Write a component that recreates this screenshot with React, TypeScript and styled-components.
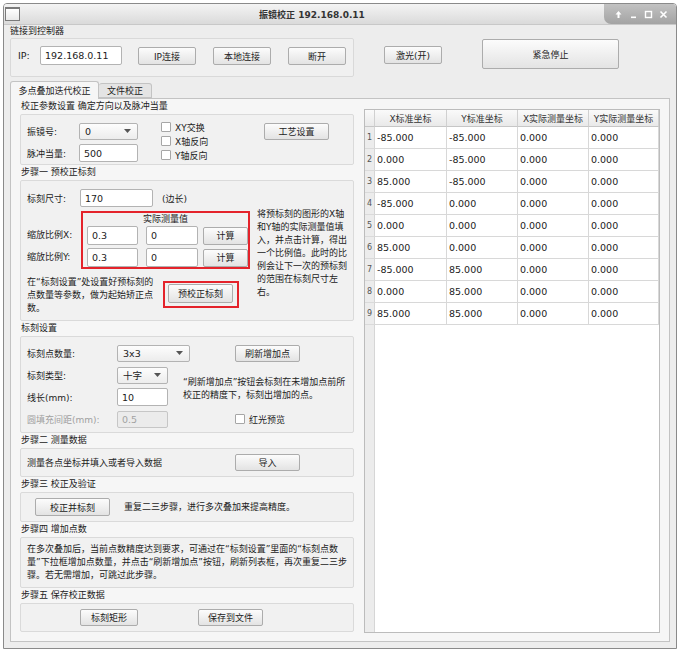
import React from "react";
import styled, { createGlobalStyle } from "styled-components";

const GlobalStyle = createGlobalStyle`
  html, body {
    margin: 0;
    padding: 0;
    background: #ffffff;
  }
  body {
    font-family: "DejaVu Sans", "Noto Sans CJK SC", sans-serif;
    font-size: 9px;
    color: #222222;
  }
  * {
    box-sizing: border-box;
  }
`;

const Window = styled.div`
  margin: 3px 0 0 3px;
  width: 674px;
  height: 646px;
  border: 1px solid #8a8a8a;
  border-radius: 4px 4px 0 0;
  display: flex;
  flex-direction: column;
  background: #ededed;
  overflow: hidden;
`;

const TitleBar = styled.div`
  height: 21px;
  flex: none;
  display: flex;
  align-items: center;
  background: linear-gradient(#f4f4f4, #dadada);
  border-bottom: 1px solid #c8c8c8;
`;

const WinIcon = styled.span`
  width: 15px;
  height: 14px;
  margin-left: 1px;
  border: 1px solid #7a7a7a;
  border-top-width: 2px;
  background: linear-gradient(#ffffff, #e9e9e9);
`;

const TitleText = styled.div`
  flex: 1;
  text-align: center;
  font-weight: bold;
  color: #333333;
`;

const Controls = styled.div`
  align-self: flex-start;
  width: 72px;
  height: 20px;
  display: flex;
  align-items: center;
  gap: 6px;
  padding-left: 10px;
  background: linear-gradient(#c2c2c2, #a3a3a3);
  border-bottom-left-radius: 7px;
`;

const Body = styled.div`
  flex: 1;
  display: flex;
  flex-direction: column;
  padding: 0 6px 6px 6px;
`;

const TopLabel = styled.div`
  height: 13px;
  line-height: 13px;
`;

const ConnectRow = styled.div`
  height: 39px;
  display: flex;
  align-items: flex-start;
`;

const ConnectGroup = styled.div`
  width: 344px;
  height: 39px;
  display: flex;
  align-items: flex-start;
  padding: 7px 0 0 7px;
  border: 1px solid #d9d9d9;
  border-radius: 2px;
  background: #f0f0f0;
`;

const IpLabel = styled.span`
  width: 22px;
  line-height: 19px;
  font-size: 9.5px;
`;

const Field = styled.input<{ $w: number; $h?: number }>`
  width: ${({ $w }) => $w}px;
  height: ${({ $h }) => $h ?? 18}px;
  border: 1px solid #b3b3b3;
  border-radius: 2px;
  background: #ffffff;
  padding: 0 4px;
  font: inherit;
  font-size: 9.5px;
  color: #222222;
  outline: none;
  &:disabled {
    background: #ebebeb;
    color: #a2a2a2;
    border-color: #c6c6c6;
  }
`;

const Button = styled.button<{ $w: number; $h?: number; $ml?: number; $mt?: number }>`
  width: ${({ $w }) => $w}px;
  height: ${({ $h }) => $h ?? 18}px;
  margin-left: ${({ $ml }) => $ml ?? 0}px;
  margin-top: ${({ $mt }) => $mt ?? 0}px;
  flex: none;
  padding: 0;
  border: 1px solid #acacac;
  border-radius: 2px;
  background: linear-gradient(#fcfcfc, #e3e3e3);
  font: inherit;
  color: #222222;
`;

const Combo = styled.div<{ $w: number }>`
  width: ${({ $w }) => $w}px;
  height: 17px;
  display: flex;
  align-items: center;
  justify-content: space-between;
  padding: 0 6px 0 5px;
  border: 1px solid #b3b3b3;
  border-radius: 2px;
  background: linear-gradient(#fdfdfd, #ececec);
  font-size: 9.5px;
`;

const Tabs = styled.div`
  margin-top: 4px;
  height: 17px;
  display: flex;
  align-items: flex-end;
`;

const Tab = styled.div<{ $active?: boolean; $w: number }>`
  position: relative;
  z-index: 1;
  width: ${({ $w }) => $w}px;
  height: ${({ $active }) => ($active ? 18 : 15)}px;
  margin-bottom: ${({ $active }) => ($active ? -1 : 0)}px;
  display: flex;
  align-items: center;
  justify-content: center;
  border: 1px solid #c3c3c3;
  border-bottom: ${({ $active }) => ($active ? "none" : "1px solid #c3c3c3")};
  border-left: ${({ $active }) => ($active ? "1px solid #c3c3c3" : "none")};
  border-radius: 3px 3px 0 0;
  background: ${({ $active }) => ($active ? "#f6f6f6" : "#e4e4e4")};
`;

const Pane = styled.div`
  height: 544px;
  display: flex;
  align-items: flex-start;
  gap: 10px;
  padding: 0 9px 8px 9px;
  border: 1px solid #c3c3c3;
  background: #f6f6f6;
`;

const LeftCol = styled.div`
  width: 334px;
  display: flex;
  flex-direction: column;
`;

const SectionLabel = styled.div`
  height: 15px;
  line-height: 15px;
  padding-left: 1px;
`;

const Group = styled.div<{ $h: number }>`
  height: ${({ $h }) => $h}px;
  border: 1px solid #dadada;
  border-radius: 2px;
  background: #f1f1f1;
`;

const FlexGroup = styled(Group)<{ $pl: number }>`
  display: flex;
  align-items: center;
  padding-left: ${({ $pl }) => $pl}px;
`;

const ParamsBody = styled.div`
  display: flex;
  align-items: flex-start;
  padding-left: 6px;
`;

const FormGrid = styled.div<{ $cols: string; $rows: string; $gap?: number }>`
  display: grid;
  grid-template-columns: ${({ $cols }) => $cols};
  grid-auto-rows: ${({ $rows }) => $rows};
  row-gap: ${({ $gap }) => $gap ?? 0}px;
  align-items: center;
`;

const CheckList = styled.div`
  margin: 5px 0 0 23px;
  width: 103px;
  display: flex;
  flex-direction: column;
`;

const CheckRow = styled.label<{ $ml?: number }>`
  height: 14px;
  margin-left: ${({ $ml }) => $ml ?? 0}px;
  display: flex;
  align-items: center;
  gap: 4px;
`;

const Box = styled.span`
  width: 10px;
  height: 10px;
  flex: none;
  border: 1px solid #a6a6a6;
  border-radius: 1px;
  background: #ffffff;
`;

const StepOneBody = styled.div`
  padding: 8px 0 0 6px;
  display: flex;
  flex-direction: column;
`;

const InlineRow = styled.div`
  display: flex;
  align-items: center;
`;

const FixedLabel = styled.span<{ $w: number }>`
  width: ${({ $w }) => $w}px;
  flex: none;
`;

const Aside = styled.span`
  margin-left: 9px;
`;

const SplitRow = styled.div`
  margin-top: 1px;
  display: flex;
  align-items: flex-start;
`;

const LeftStack = styled.div`
  padding-top: 3px;
  display: flex;
  flex-direction: column;
`;

const MeasureBlock = styled.div`
  display: flex;
  align-items: flex-start;
`;

const MeasureLabels = styled.div`
  width: 54px;
  padding-top: 15px;
  display: flex;
  flex-direction: column;
  gap: 3px;
`;

const MeasureLabel = styled.div`
  height: 19px;
  line-height: 19px;
`;

const RedBox = styled.div`
  border: 2px solid #e4232b;
`;

const MeasureBox = styled(RedBox)`
  width: 169px;
  height: 58px;
  display: flex;
  flex-direction: column;
`;

const MeasureTitle = styled.div`
  height: 13px;
  line-height: 12px;
  text-align: center;
`;

const MeasureRow = styled.div<{ $mt: number }>`
  margin-top: ${({ $mt }) => $mt}px;
  padding-left: 4px;
  display: flex;
  align-items: center;
`;

const Para = styled.p<{ $w?: number; $ml?: number; $mt?: number }>`
  margin: ${({ $mt }) => $mt ?? 0}px 0 0 ${({ $ml }) => $ml ?? 0}px;
  width: ${({ $w }) => ($w ? `${$w}px` : "auto")};
  line-height: 13px;
  white-space: nowrap;
`;

const BottomRow = styled.div`
  margin-top: 7px;
  display: flex;
  align-items: flex-start;
`;

const PreMarkBox = styled(RedBox)`
  margin: 5px 0 0 8px;
  padding: 1px 4px 3px 3px;
`;

const SettingsGrid = styled(FormGrid)`
  padding: 5px 0 0 6px;
`;

const DimLabel = styled.span`
  color: #a0a0a0;
`;

const HintCell = styled.div`
  grid-column: 3;
  grid-row: 2 / span 2;
  padding-top: 6px;
  line-height: 13px;
  white-space: nowrap;
`;

const TableFrame = styled.div`
  margin-top: 10px;
  width: 296px;
  height: 524px;
  border: 1px solid #bcbcbc;
  background: linear-gradient(
    to right,
    #ececec 0,
    #ececec 9px,
    #d6d6d6 9px,
    #d6d6d6 10px,
    #ffffff 10px
  );
`;

const TableGrid = styled.div`
  display: grid;
  grid-template-columns: 10px 72px 71px 71px 70px;
  grid-template-rows: 17px;
  grid-auto-rows: 22px;
`;

const HeadCell = styled.div`
  display: flex;
  align-items: center;
  justify-content: center;
  border-right: 1px solid #d0d0d0;
  border-bottom: 1px solid #c6c6c6;
  background: linear-gradient(#fafafa, #e9e9e9);
  color: #333333;
`;

const NumCell = styled.div`
  display: flex;
  align-items: center;
  justify-content: center;
  border-right: 1px solid #d6d6d6;
  border-bottom: 1px solid #dadada;
  background: #ececec;
  font-size: 8px;
  color: #555555;
`;

const Cell = styled.div`
  display: flex;
  align-items: center;
  padding-left: 2px;
  border-right: 1px solid #d8d8d8;
  border-bottom: 1px solid #d8d8d8;
  background: #ffffff;
  font-size: 9.5px;
`;

const Arrow = () => (
  <svg width="7" height="4" viewBox="0 0 7 4">
    <polygon points="0,0 7,0 3.5,4" fill="#555" />
  </svg>
);

const WinButtons = () => (
  <Controls>
    <svg width="9" height="9" viewBox="0 0 9 9">
      <path d="M4.5 1 L1.5 4.5 H3.5 V8 H5.5 V4.5 H7.5 Z" fill="#fff" />
    </svg>
    <svg width="9" height="9" viewBox="0 0 9 9">
      <rect x="2" y="6.5" width="5" height="1.6" fill="#fff" />
    </svg>
    <svg width="9" height="9" viewBox="0 0 9 9">
      <rect x="1.5" y="1.5" width="6" height="6" fill="none" stroke="#fff" strokeWidth="1.4" />
    </svg>
    <svg width="9" height="9" viewBox="0 0 9 9">
      <path d="M1.5 1.5 L7.5 7.5 M7.5 1.5 L1.5 7.5" stroke="#fff" strokeWidth="1.6" />
    </svg>
  </Controls>
);

const points: [string, string][] = [
  ["-85.000", "-85.000"],
  ["0.000", "-85.000"],
  ["85.000", "-85.000"],
  ["-85.000", "0.000"],
  ["0.000", "0.000"],
  ["85.000", "0.000"],
  ["-85.000", "85.000"],
  ["0.000", "85.000"],
  ["85.000", "85.000"],
];

const headers = ["X标准坐标", "Y标准坐标", "X实际测量坐标", "Y实际测量坐标"];

const PointTable = () => (
  <TableFrame>
    <TableGrid>
      <HeadCell />
      {headers.map((h) => (
        <HeadCell key={h}>{h}</HeadCell>
      ))}
      {points.map(([x, y], i) => (
        <React.Fragment key={i}>
          <NumCell>{i + 1}</NumCell>
          <Cell>{x}</Cell>
          <Cell>{y}</Cell>
          <Cell>0.000</Cell>
          <Cell>0.000</Cell>
        </React.Fragment>
      ))}
    </TableGrid>
  </TableFrame>
);

export default function App() {
  return (
    <>
      <GlobalStyle />
      <Window>
        <TitleBar>
          <WinIcon />
          <TitleText>振镜校正 192.168.0.11</TitleText>
          <WinButtons />
        </TitleBar>
        <Body>
          <TopLabel>链接到控制器</TopLabel>
          <ConnectRow>
            <ConnectGroup>
              <IpLabel>IP:</IpLabel>
              <Field $w={82} $h={19} defaultValue="192.168.0.11" />
              <Button $w={58} $ml={16} $mt={1}>IP连接</Button>
              <Button $w={58} $ml={17} $mt={1}>本地连接</Button>
              <Button $w={58} $ml={17} $mt={1}>断开</Button>
            </ConnectGroup>
            <Button $w={58} $ml={30} $mt={8}>激光(开)</Button>
            <Button $w={137} $h={30} $ml={40} $mt={1}>紧急停止</Button>
          </ConnectRow>

          <Tabs>
            <Tab $active $w={89}>多点叠加迭代校正</Tab>
            <Tab $w={53}>文件校正</Tab>
          </Tabs>
          <Pane>
            <LeftCol>
              <SectionLabel>校正参数设置 确定方向以及脉冲当量</SectionLabel>
              <Group $h={51}>
                <ParamsBody>
                  <FormGrid $cols="52px 59px" $rows="18px" $gap={4} style={{ marginTop: 7 }}>
                    <span>振镜号:</span>
                    <Combo $w={59}>
                      0<Arrow />
                    </Combo>
                    <span>脉冲当量:</span>
                    <Field $w={59} defaultValue="500" />
                  </FormGrid>
                  <CheckList>
                    <CheckRow><Box />XY交换</CheckRow>
                    <CheckRow><Box />X轴反向</CheckRow>
                    <CheckRow><Box />Y轴反向</CheckRow>
                  </CheckList>
                  <Button $w={65} $h={17} $mt={8}>工艺设置</Button>
                </ParamsBody>
              </Group>

              <SectionLabel>步骤一 预校正标刻</SectionLabel>
              <Group $h={141}>
                <StepOneBody>
                  <InlineRow>
                    <FixedLabel $w={53}>标刻尺寸:</FixedLabel>
                    <Field $w={73} defaultValue="170" />
                    <Aside>(边长)</Aside>
                  </InlineRow>
                  <SplitRow>
                    <LeftStack>
                      <MeasureBlock>
                        <MeasureLabels>
                          <MeasureLabel>缩放比例X:</MeasureLabel>
                          <MeasureLabel>缩放比例Y:</MeasureLabel>
                        </MeasureLabels>
                        <MeasureBox>
                          <MeasureTitle>实际测量值</MeasureTitle>
                          <MeasureRow $mt={0}>
                            <Field $w={51} $h={19} defaultValue="0.3" />
                            <Field $w={52} $h={19} defaultValue="0" style={{ marginLeft: 8 }} />
                            <Button $w={45} $ml={5}>计算</Button>
                          </MeasureRow>
                          <MeasureRow $mt={3}>
                            <Field $w={51} $h={19} defaultValue="0.3" />
                            <Field $w={52} $h={19} defaultValue="0" style={{ marginLeft: 8 }} />
                            <Button $w={45} $ml={5}>计算</Button>
                          </MeasureRow>
                        </MeasureBox>
                      </MeasureBlock>
                      <BottomRow>
                        <Para $w={128}>
                          在“标刻设置”处设置好预标刻的
                          <br />
                          点数量等参数，做为起始矫正点
                          <br />
                          数。
                        </Para>
                        <PreMarkBox>
                          <Button $w={65} $h={19}>预校正标刻</Button>
                        </PreMarkBox>
                      </BottomRow>
                    </LeftStack>
                    <Para $w={92} $ml={7}>
                      将预标刻的图形的X轴
                      <br />
                      和Y轴的实际测量值填
                      <br />
                      入，并点击计算，得出
                      <br />
                      一个比例值。此时的比
                      <br />
                      例会让下一次的预标刻
                      <br />
                      的范围在标刻尺寸左
                      <br />
                      右。
                    </Para>
                  </SplitRow>
                </StepOneBody>
              </Group>

              <SectionLabel>标刻设置</SectionLabel>
              <Group $h={97}>
                <SettingsGrid $cols="90px 66px 1fr" $rows="22px">
                  <span>标刻点数量:</span>
                  <Combo $w={73}>
                    3x3<Arrow />
                  </Combo>
                  <div>
                    <Button $w={65} $h={17} $ml={52}>刷新增加点</Button>
                  </div>
                  <span>标刻类型:</span>
                  <Combo $w={51}>
                    十字<Arrow />
                  </Combo>
                  <HintCell>
                    “刷新增加点”按钮会标刻在未增加点前所
                    <br />
                    校正的精度下，标刻出增加的点。
                  </HintCell>
                  <span>线长(mm):</span>
                  <Field $w={51} defaultValue="10" />
                  <DimLabel>圆填充间距(mm):</DimLabel>
                  <Field $w={51} $h={17} defaultValue="0.5" disabled />
                  <CheckRow $ml={52}>
                    <Box />
                    红光预览
                  </CheckRow>
                </SettingsGrid>
              </Group>

              <SectionLabel>步骤二 测量数据</SectionLabel>
              <FlexGroup $h={29} $pl={6}>
                <FixedLabel $w={208}>测量各点坐标并填入或者导入数据</FixedLabel>
                <Button $w={65} $h={17}>导入</Button>
              </FlexGroup>

              <SectionLabel>步骤三 校正及验证</SectionLabel>
              <FlexGroup $h={30} $pl={14}>
                <Button $w={75} $h={18}>校正并标刻</Button>
                <Para $ml={14}>重复二三步骤，进行多次叠加来提高精度。</Para>
              </FlexGroup>

              <SectionLabel>步骤四 增加点数</SectionLabel>
              <FlexGroup $h={51} $pl={6}>
                <Para>
                  在多次叠加后，当前点数精度达到要求，可通过在“标刻设置”里面的“标刻点数
                  <br />
                  量”下拉框增加点数量，并点击“刷新增加点”按钮，刷新列表框，再次重复二三步
                  <br />
                  骤。若无需增加，可跳过此步骤。
                </Para>
              </FlexGroup>

              <SectionLabel>步骤五 保存校正数据</SectionLabel>
              <FlexGroup $h={29} $pl={59}>
                <Button $w={58} $h={17}>标刻矩形</Button>
                <Button $w={65} $h={17} $ml={60}>保存到文件</Button>
              </FlexGroup>
            </LeftCol>
            <PointTable />
          </Pane>
        </Body>
      </Window>
    </>
  );
}
